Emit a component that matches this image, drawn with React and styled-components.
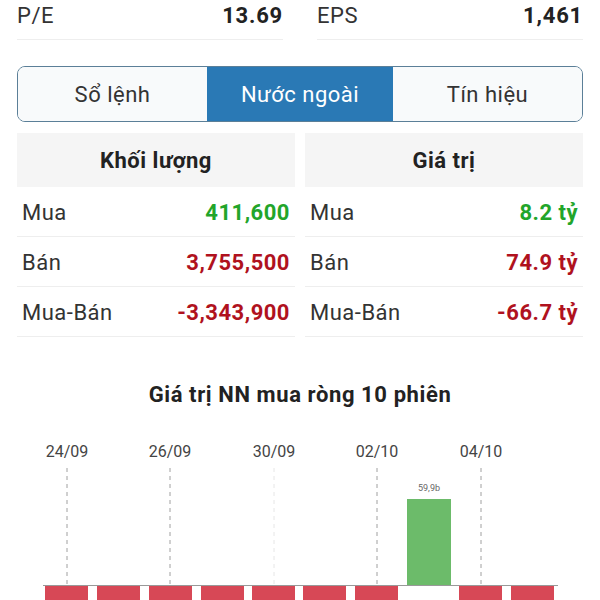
import React from "react";
import styled, { createGlobalStyle } from "styled-components";

const GlobalStyle = createGlobalStyle`
  html, body { margin: 0; padding: 0; background: #fff; }
  body { font-family: Roboto, "Noto Sans", "Liberation Sans", sans-serif; color: #222; overflow: hidden; }
`;

const Page = styled.div`
  width: 600px;
  height: 600px;
  box-sizing: border-box;
  padding: 0 17px;
  overflow: hidden;
`;

const StatsRow = styled.div`
  display: grid;
  grid-template-columns: 1fr 1fr;
  column-gap: 34px;
`;

const StatCell = styled.div`
  height: 30px;
  padding-bottom: 9px;
  border-bottom: 1px solid #eeeeee;
  display: flex;
  align-items: center;
  justify-content: space-between;
  font-size: 22px;
  letter-spacing: 0.5px;
`;

const StatLabel = styled.span`
  color: #333;
`;

const StatValue = styled.span`
  font-weight: 700;
  color: #222;
  letter-spacing: 0.8px;
`;

const Tabs = styled.div`
  margin-top: 26px;
  height: 56px;
  box-sizing: border-box;
  border: 1.5px solid #5b7f98;
  border-radius: 8px;
  overflow: hidden;
  display: grid;
  grid-template-columns: 189px 186px 1fr;
`;

const Tab = styled.div`
  display: flex;
  align-items: center;
  justify-content: center;
  font-size: 22px;
  letter-spacing: 0.5px;
  background: ${(p) => (p.$active ? "#2a79b5" : "#f8fafb")};
  color: ${(p) => (p.$active ? "#fff" : "#333")};
`;

const Tables = styled.div`
  margin-top: 11px;
  display: grid;
  grid-template-columns: 1fr 1fr;
  column-gap: 10px;
`;

const Panel = styled.div`
  display: flex;
  flex-direction: column;
`;

const PanelHeader = styled.div`
  height: 54px;
  background: #f5f5f5;
  display: flex;
  align-items: center;
  justify-content: center;
  font-size: 22px;
  letter-spacing: 0.5px;
  font-weight: 700;
  color: #222;
`;

const Row = styled.div`
  height: 50px;
  box-sizing: border-box;
  border-bottom: 1px solid #eeeeee;
  display: flex;
  align-items: center;
  justify-content: space-between;
  padding: 1px 5px 0 5px;
  font-size: 22px;
  letter-spacing: 0.5px;
`;

const RowLabel = styled.span`
  color: #333;
`;

const RowValue = styled.span`
  font-weight: 700;
  color: ${(p) => (p.$up ? "#22a52a" : "#b0121e")};
`;

const ChartTitle = styled.div`
  margin-top: 46px;
  height: 24px;
  line-height: 24px;
  text-align: center;
  font-size: 22px;
  letter-spacing: 0.6px;
  font-weight: 700;
  color: #222;
`;

const ChartSvg = styled.svg`
  display: block;
  margin-top: 18px;
  font-family: Roboto, "Noto Sans", "Liberation Sans", sans-serif;
`;

const volume = [
  { label: "Mua", value: "411,600", up: true },
  { label: "Bán", value: "3,755,500" },
  { label: "Mua-Bán", value: "-3,343,900" },
];
const worth = [
  { label: "Mua", value: "8.2 tỷ", up: true },
  { label: "Bán", value: "74.9 tỷ" },
  { label: "Mua-Bán", value: "-66.7 tỷ" },
];

const dates = [
  { x: 67, t: "24/09" },
  { x: 170, t: "26/09" },
  { x: 274, t: "30/09", faint: true },
  { x: 377, t: "02/10" },
  { x: 481, t: "04/10" },
];
const redBars = [45, 97, 149, 201, 252, 303, 355, 459, 511];

function Chart() {
  return (
    <ChartSvg width="566" height="175" viewBox="17 425 566 175">
      {dates.map((d) => (
        <g key={d.t}>
          <text x={d.x} y={457} textAnchor="middle" fontSize="16" fill="#444">
            {d.t}
          </text>
          <line
            x1={d.x}
            x2={d.x}
            y1={468}
            y2={585}
            stroke={d.faint ? "#e6e6e6" : "#a0a0a0"}
            strokeWidth="1"
            strokeDasharray="4 4"
          />
        </g>
      ))}
      {redBars.map((x) => (
        <rect key={x} x={x} y={586} width={43} height={20} fill="#d74856" />
      ))}
      <rect x={407} y={499} width={44} height={86} fill="#6cbb6a" />
      <text x={429} y={491} textAnchor="middle" fontSize="9" fill="#666">
        59,9b
      </text>
      <line x1={43} x2={558} y1={585.5} y2={585.5} stroke="#999" strokeWidth="1" />
    </ChartSvg>
  );
}

export default function App() {
  return (
    <>
      <GlobalStyle />
      <Page>
        <StatsRow>
          <StatCell>
            <StatLabel>P/E</StatLabel>
            <StatValue>13.69</StatValue>
          </StatCell>
          <StatCell>
            <StatLabel>EPS</StatLabel>
            <StatValue>1,461</StatValue>
          </StatCell>
        </StatsRow>
        <Tabs>
          <Tab>Sổ lệnh</Tab>
          <Tab $active>Nước ngoài</Tab>
          <Tab>Tín hiệu</Tab>
        </Tabs>
        <Tables>
          <Panel>
            <PanelHeader>Khối lượng</PanelHeader>
            {volume.map((r) => (
              <Row key={r.label}>
                <RowLabel>{r.label}</RowLabel>
                <RowValue $up={r.up}>{r.value}</RowValue>
              </Row>
            ))}
          </Panel>
          <Panel>
            <PanelHeader>Giá trị</PanelHeader>
            {worth.map((r) => (
              <Row key={r.label}>
                <RowLabel>{r.label}</RowLabel>
                <RowValue $up={r.up}>{r.value}</RowValue>
              </Row>
            ))}
          </Panel>
        </Tables>
        <ChartTitle>Giá trị NN mua ròng 10 phiên</ChartTitle>
        <Chart />
      </Page>
    </>
  );
}
